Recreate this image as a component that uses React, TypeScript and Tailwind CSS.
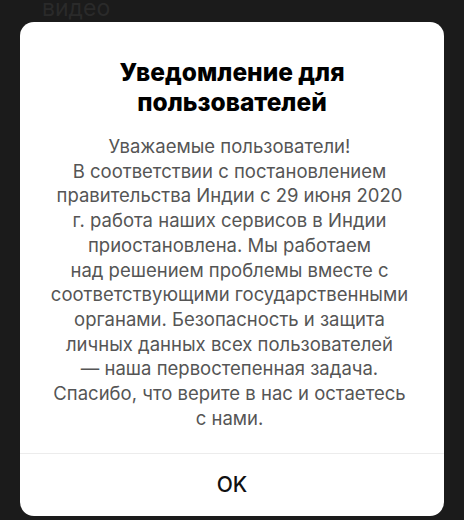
const bodyLines = [
  "Уважаемые пользователи!",
  "В соответствии с постановлением",
  "правительства Индии с 29 июня 2020",
  "г. работа наших сервисов в Индии",
  "приостановлена. Мы работаем",
  "над решением проблемы вместе с",
  "соответствующими государственными",
  "органами. Безопасность и защита",
  "личных данных всех пользователей",
  "— наша первостепенная задача.",
  "Спасибо, что верите в нас и остаетесь",
  "с нами.",
];

const App = () => {
  return (
    <div
      className="w-[464px] h-[520px] bg-[#1b1b1b] overflow-hidden flex flex-col"
      style={{ fontFamily: 'Inter, "Liberation Sans", Arial, sans-serif' }}
    >
      {/* -- BACKGROUND TEXT -- */}
      <div className="h-[22px] pl-[42px] text-[23px] leading-[16px] text-[#2a2a2a]">
        видео
      </div>

      {/* -- MODAL -- */}
      <div className="mx-5 h-[494px] bg-white rounded-[14px] flex flex-col">
        <div className="pt-[35px] text-center">
          <h1 className="text-[24.5px] leading-[30px] font-extrabold text-black">
            Уведомление для
            <br />
            пользователей
          </h1>
          <div className="mt-[17px] pr-[5px] text-[18.5px] leading-[24.7px] text-[#555]">
            {bodyLines.map((line) => (
              <p key={line} className="whitespace-nowrap">{line}</p>
            ))}
          </div>
        </div>
        <div className="mt-auto border-t border-[#ececec] h-[63px] flex items-center justify-center">
          <span className="text-[21px] font-medium text-[#111]">OK</span>
        </div>
      </div>
    </div>
  );
};

export default App;
